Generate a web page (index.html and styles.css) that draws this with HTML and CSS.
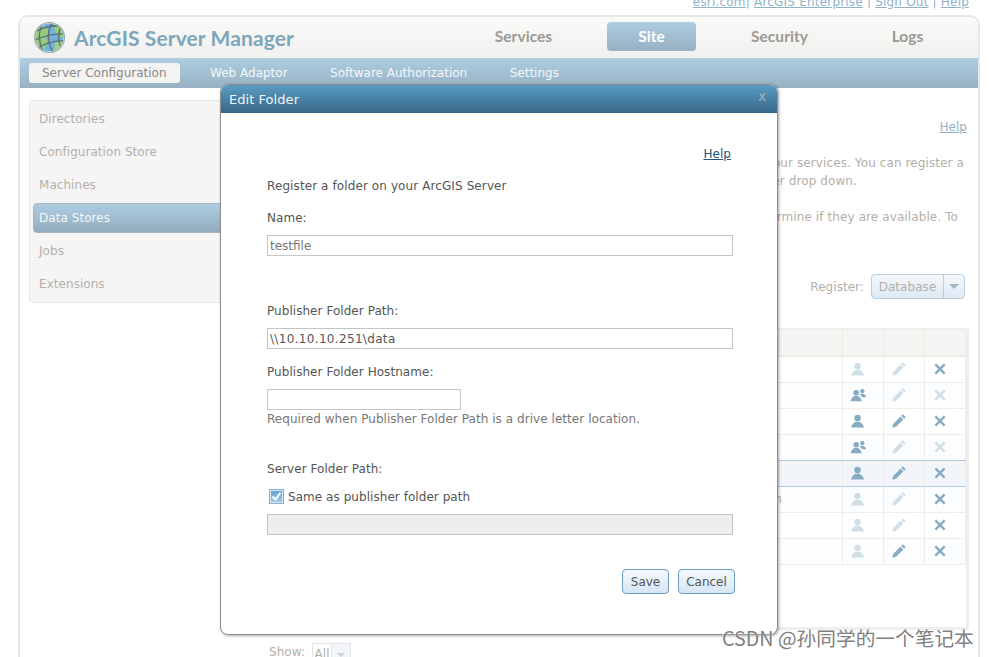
FILE: index.html
```html
<!DOCTYPE html>
<html lang="en">
<head>
<meta charset="utf-8">
<title>ArcGIS Server Manager</title>
<link rel="stylesheet" href="styles.css">
</head>
<body>
<svg class="defs" width="0" height="0" aria-hidden="true">
  <symbol id="i-person" viewBox="0 0 16 16"><circle cx="8" cy="4.200" r="3.500"/><path d="M1 14.500C2 11.500 3.500 9.300 6 8.300h4c2.500 1 4 3.200 5 6.200z"/></symbol>
  <symbol id="i-group" viewBox="0 0 18 16"><circle cx="6.500" cy="5" r="3"/><path d="M.5 14C1.300 11.300 2.500 9.500 4.700 8.500h3.600c2.200 1 3.400 2.800 4.200 5.500z"/><circle cx="13" cy="3.400" r="2.300"/><path d="M10.200 7c.7-.6 1.300-.8 2-.8h1.800c1.600.4 2.700 1.700 3.200 3.700h-4.400c-.6-1.300-1.400-2.200-2.600-2.900z"/></symbol>
  <symbol id="i-pencil" viewBox="0 0 14 14"><path d="M10.800.3l2.900 2.900-1.500 1.500-2.900-2.900zM8.500 2.600l2.900 2.900-7.300 7.300-3.900 1 1-3.900z"/></symbol>
  <symbol id="i-x" viewBox="0 0 12 12"><path d="M2.200.5L6 4.300 9.800.5l1.700 1.700L7.700 6l3.800 3.800-1.700 1.700L6 7.700l-3.800 3.800-1.700-1.700L4.300 6 .5 2.200z"/></symbol>
</svg>

<nav class="toplinks"><a href="#">esri.com</a>| <a href="#">ArcGIS Enterprise</a> | <a href="#">Sign Out</a> | <a href="#">Help</a></nav>

<div class="frame">
  <header class="masthead">
    <div class="brand">
      <svg class="logo" width="33" height="33" viewBox="0 0 33 33" aria-hidden="true">
        <defs><clipPath id="globe"><circle cx="16.500" cy="16.500" r="14"/></clipPath></defs>
        <circle cx="16.500" cy="16.500" r="15.500" fill="#9aa5a8"/>
        <circle cx="16.500" cy="16.500" r="14.500" fill="#e8eeee"/>
        <circle cx="16.500" cy="16.500" r="14" fill="#74b2dc"/>
        <g clip-path="url(#globe)">
          <path d="M2 6h11l3 5-3 5 2 6-5 8-8-6z" fill="#98cc7c"/>
          <path d="M20 2l10 6 2 10-6-3-4-5z" fill="#98cc7c"/>
          <path d="M22 22l8-3-2 9-7 3z" fill="#a4d084"/>
          <path d="M0 12C9 6 20 4 32 5M0 20c10-5 22-8 33-7M3 28c9-6 20-9 30-8M10 1C5 10 5 22 11 33M20 0C14 10 14 22 21 33M29 3c-5 9-4 20 1 27" fill="none" stroke="#5f6e76" stroke-width="1.300"/>
        </g>
      </svg>
      <span class="title">ArcGIS Server Manager</span>
    </div>
    <ul class="mainnav">
      <li>Services</li>
      <li class="on">Site</li>
      <li>Security</li>
      <li>Logs</li>
    </ul>
  </header>
  <ul class="subnav">
    <li class="on">Server Configuration</li>
    <li>Web Adaptor</li>
    <li>Software Authorization</li>
    <li>Settings</li>
  </ul>
  <div class="content">
    <aside class="sidebar">
      <a>Directories</a>
      <a>Configuration Store</a>
      <a>Machines</a>
      <a class="on">Data Stores</a>
      <a>Jobs</a>
      <a>Extensions</a>
    </aside>
    <main class="pane">
      <div class="pane-help"><a href="#">Help</a></div>
      <p class="intro l1">Registering locations lets the server find the data for your services. You can register a</p>
      <p class="intro l2">database or a folder from the Register drop down.</p>
      <p class="intro l3">Validate the registered items to determine if they are available. To</p>
      <div class="register">
        <span>Register:</span>
        <span class="combo"><span class="combo-label">Database</span><span class="combo-arrow"></span></span>
      </div>
      <div class="grid-panel">
        <table class="grid">
          <thead><tr><th></th><th></th><th></th><th></th></tr></thead>
          <tbody>
            <tr><td>arcgis_data</td><td class="dim"><svg class="ic-p"><use href="#i-person"/></svg></td><td class="dim"><svg class="ic-e"><use href="#i-pencil"/></svg></td><td><svg class="ic-x"><use href="#i-x"/></svg></td></tr>
            <tr class="alt"><td>managed</td><td><svg class="ic-g"><use href="#i-group"/></svg></td><td class="dim"><svg class="ic-e"><use href="#i-pencil"/></svg></td><td class="dim"><svg class="ic-x"><use href="#i-x"/></svg></td></tr>
            <tr><td>sample</td><td><svg class="ic-p"><use href="#i-person"/></svg></td><td><svg class="ic-e"><use href="#i-pencil"/></svg></td><td><svg class="ic-x"><use href="#i-x"/></svg></td></tr>
            <tr class="alt pre-sel"><td>shared</td><td><svg class="ic-g"><use href="#i-group"/></svg></td><td class="dim"><svg class="ic-e"><use href="#i-pencil"/></svg></td><td class="dim"><svg class="ic-x"><use href="#i-x"/></svg></td></tr>
            <tr class="sel"><td>testfile</td><td><svg class="ic-p"><use href="#i-person"/></svg></td><td><svg class="ic-e"><use href="#i-pencil"/></svg></td><td><svg class="ic-x"><use href="#i-x"/></svg></td></tr>
            <tr class="alt"><td class="name-end">path</td><td class="dim"><svg class="ic-p"><use href="#i-person"/></svg></td><td class="dim"><svg class="ic-e"><use href="#i-pencil"/></svg></td><td><svg class="ic-x"><use href="#i-x"/></svg></td></tr>
            <tr><td>raster</td><td class="dim"><svg class="ic-p"><use href="#i-person"/></svg></td><td class="dim"><svg class="ic-e"><use href="#i-pencil"/></svg></td><td><svg class="ic-x"><use href="#i-x"/></svg></td></tr>
            <tr class="alt"><td>vector</td><td class="dim"><svg class="ic-p"><use href="#i-person"/></svg></td><td><svg class="ic-e"><use href="#i-pencil"/></svg></td><td><svg class="ic-x"><use href="#i-x"/></svg></td></tr>
          </tbody>
        </table>
      </div>
      <div class="show"><span class="show-label">Show:</span><span class="mini-combo"><span class="mini-label">All</span><span class="mini-arrow"></span></span></div>
    </main>
  </div>
</div>

<section class="dialog" role="dialog" aria-label="Edit Folder">
  <div class="dialog-bar"><span>Edit Folder</span><span class="dialog-close">x</span></div>
  <div class="dialog-body">
    <div class="dialog-help"><a href="#">Help</a></div>
    <p class="line lead">Register a folder on your ArcGIS Server</p>
    <label class="line name-label">Name:</label>
    <input class="field" type="text" value="testfile">
    <label class="line path-label">Publisher Folder Path:</label>
    <input class="field path-field" type="text" value="\\10.10.10.251\data">
    <label class="line host-label">Publisher Folder Hostname:</label>
    <input class="field short" type="text">
    <p class="line hint">Required when Publisher Folder Path is a drive letter location.</p>
    <label class="line server-label">Server Folder Path:</label>
    <div class="check-row">
      <span class="check"><svg width="11" height="11" viewBox="0 0 11 11" aria-hidden="true"><path d="M1.500 5.500l3 3 5-7" fill="none" stroke="#fff" stroke-width="2"/></svg></span>
      <span>Same as publisher folder path</span>
    </div>
    <input class="field off" type="text" disabled>
    <div class="actions">
      <button class="btn save" type="button">Save</button>
      <button class="btn cancel" type="button">Cancel</button>
    </div>
  </div>
</section>

<div class="watermark">CSDN @孙同学的一个笔记本</div>
</body>
</html>
```

FILE: styles.css
```css
* { box-sizing: border-box; }
html, body { margin: 0; height: 657px; overflow: hidden; background: #fff; }
body { font: 12px/16px "DejaVu Sans", Verdana, sans-serif; letter-spacing: .05px; color: #555; position: relative; }
.defs { position: absolute; }
a { color: inherit; }

.toplinks { height: 15px; margin: -5px 0 5px; padding-right: 20px; text-align: right; color: #8fb2c8; line-height: 15px; letter-spacing: .2px; }

.frame { margin: 0 9px 0 18px; height: 660px; border: 2px solid #e6e6e6; border-bottom: 0; border-radius: 10px 10px 0 0; overflow: hidden; background: #fff; }

.masthead { height: 41px; display: flex; background: linear-gradient(#fafaf8, #f0f0ee); }
.brand { width: 440px; display: flex; align-items: center; padding: 0 0 0 13px; gap: 8px; }
.logo { flex: none; }
.title { font: 700 21px/30px Lato, sans-serif; color: #7ca6bb; letter-spacing: .1px; }
.mainnav { list-style: none; margin: 0; padding: 0; display: grid; grid-template-columns: repeat(4, 128px); }
.mainnav li { width: 89px; height: 29px; margin: 5px 0 0 19px; text-align: center; font: 700 15.500px/29px Lato, sans-serif; color: #9c9893; border-radius: 4px; }
.mainnav li.on { color: #fff; background: linear-gradient(#aecde1, #97b0c2); }

.subnav { list-style: none; margin: 0; padding: 5px 0 0 9px; height: 30px; display: flex; gap: 30.500px; background: linear-gradient(#adcde1, #98b1c2); color: #f4f8fb; line-height: 20px; letter-spacing: 0; }
.subnav li { padding: 0 12px 0 0; }
.subnav li.on { background: #f4f4f2; color: #888; border-radius: 3px; padding: 0 13px; height: 20px; }

.content { display: flex; align-items: flex-start; }
.sidebar { width: 220px; height: 203px; margin: 12px 0 0 9px; padding: 3px 0 0 3px; flex: none; background: #f5f5f5; border: 1px solid #e6e6e6; border-radius: 4px; display: flex; flex-direction: column; color: #b5b0a9; }
.sidebar a { display: block; height: 33px; line-height: 31px; padding-left: 6px; }
.sidebar a.on { height: 30px; margin: 0 -20px 3px 0; color: #f4f8fb; background: linear-gradient(#aecde1, #93adbf); border-radius: 4px 0 0 4px; border: 1px solid #a5b6c2; padding-left: 5px; line-height: 29px; }

.pane { flex: 1; padding: 31px 9px 0 20px; color: #b4afa8; }
.pane-help { text-align: right; padding-right: 2px; color: #8fb2c8; }
.intro { margin: 0; white-space: nowrap; text-align: right; line-height: 18px; letter-spacing: .1px; }
.l1 { margin-top: 19px; padding-right: 5px; }
.l2 { padding-right: 112px; }
.l3 { margin-top: 18px; padding-right: 11px; }
.register { display: flex; justify-content: flex-end; align-items: center; gap: 7px; margin: 48px 4px 0 0; height: 25px; }
.combo { display: flex; height: 25px; width: 94px; border: 1px solid #b7cfe1; border-radius: 4px; background: linear-gradient(#f4f8fc, #dde9f5); }
.combo-label { width: 72px; text-align: center; line-height: 25px; border-right: 1px solid #b7cfe1; }
.combo-arrow { flex: 1; position: relative; }
.combo-arrow::after { content: ""; position: absolute; left: 5px; top: 9px; border: 5px solid transparent; border-top: 5px solid #9db6c8; border-bottom: 0; }

.grid-panel { margin-top: 29px; height: 302px; border-top: 2px solid #eeeeec; border-right: 3px solid #eeeeec; border-bottom: 3px solid #eeeeec; }
.grid { width: 100%; border-collapse: collapse; table-layout: fixed; }
.grid th { height: 26px; background: #f5f5f3; border-right: 1px solid #efebe3; border-bottom: 2px solid #efebe3; }
.grid th:nth-child(n+2) { width: 41px; }
.grid td { height: 26px; padding: 0 0 0 7px; border-right: 1px solid #f1ece4; border-bottom: 1px solid #f1ece4; line-height: 0; color: #86acc2; background: #fff; }
.grid td:first-child { font-size: 12px; line-height: 16px; color: #b4afa8; padding-left: 8px; }
.grid td.name-end { text-align: right; padding-right: 60px; }
.grid tr.alt td { background: #fcfdfe; }
.grid tr.pre-sel td { border-bottom-color: #b5cde0; }
.grid tr.sel td { background: #f1f5fa; border-bottom-color: #b5cde0; }
.grid td.dim { color: #cfdee7; }
.grid svg { fill: currentColor; display: inline-block; vertical-align: middle; }
.ic-p { width: 15px; height: 15px; }
.ic-g { width: 17px; height: 15px; }
.ic-e { width: 14px; height: 14px; margin-left: 1px; }
.ic-x { width: 12px; height: 12px; margin-left: 2px; }

.show { display: flex; align-items: flex-start; gap: 7px; margin-top: 13px; }
.show-label { padding-top: 1px; }
.mini-combo { display: flex; height: 20px; width: 39px; border: 1px solid #e4e4e4; }
.mini-label { width: 19px; text-align: center; line-height: 20px; border-right: 1px solid #e4e4e4; }
.mini-arrow { flex: 1; position: relative; background: #f2f5f9; }
.mini-arrow::after { content: ""; position: absolute; left: 5px; top: 9px; border: 4px solid transparent; border-top: 4px solid #c2d3e0; border-bottom: 0; }

.dialog { position: absolute; left: 220px; top: 84px; width: 558px; height: 551px; background: #fff; border: 1px solid #8e8e8e; border-radius: 8px; box-shadow: 1px 1px 3px rgba(0,0,0,.35); overflow: hidden; color: #555; }
.dialog-bar { height: 28px; display: flex; justify-content: space-between; padding: 0 11px 0 8px; background: linear-gradient(#5a9cc4, #366789); color: #f2f6f9; font-size: 13px; line-height: 30px; }
.dialog-close { color: #97adbc; font: 700 14px/22px "Liberation Sans", sans-serif; text-shadow: 0 0 1px #33607f; }
.dialog-body { padding: 33px 44px 0 46px; display: flex; flex-direction: column; align-items: flex-start; }
.dialog-help { align-self: flex-end; padding-right: 2px; color: #23557e; }
.line { display: block; margin: 0; line-height: 16px; }
.lead { margin-top: 16px; letter-spacing: .1px; }
.name-label { margin-top: 16px; }
.field { display: block; width: 466px; height: 21px; margin: 9px 0 0; padding: 0 2px; border: 1px solid #c5c5c5; background: #fff; font: 12px "DejaVu Sans", Verdana, sans-serif; color: #777; }
.path-field { color: #555; letter-spacing: .33px; }
.path-label { margin-top: 47px; }
.host-label { margin-top: 15px; }
.short { width: 194px; }
.hint { margin-top: 1px; color: #777; }
.server-label { margin-top: 34px; }
.check-row { display: flex; align-items: center; gap: 4px; margin: 11px 0 0 2px; height: 17px; }
.check { width: 15px; height: 15px; display: flex; align-items: center; justify-content: center; border: 1px solid #8cb0cc; background: linear-gradient(#5f9fd3, #a9cde8); box-shadow: inset 0 0 0 1px #d8e6f2; }
.field.off { background: #eee; margin-top: 9px; }
.actions { align-self: flex-end; display: flex; gap: 9px; margin: 34px -2px 0 0; }
.btn { height: 25px; padding: 0; border: 1px solid #6f9cc2; border-radius: 4px; background: linear-gradient(#f4f8fc, #d6e6f6); font: 12px "DejaVu Sans", Verdana, sans-serif; color: #555; }
.save { width: 47px; }
.cancel { width: 57px; }

.watermark { position: absolute; left: 722px; top: 625px; font: 19.700px/26px "Noto Sans CJK SC", "Liberation Sans", sans-serif; letter-spacing: 0; color: #808080; text-shadow: 0 0 2px #fff; white-space: nowrap; }
```
